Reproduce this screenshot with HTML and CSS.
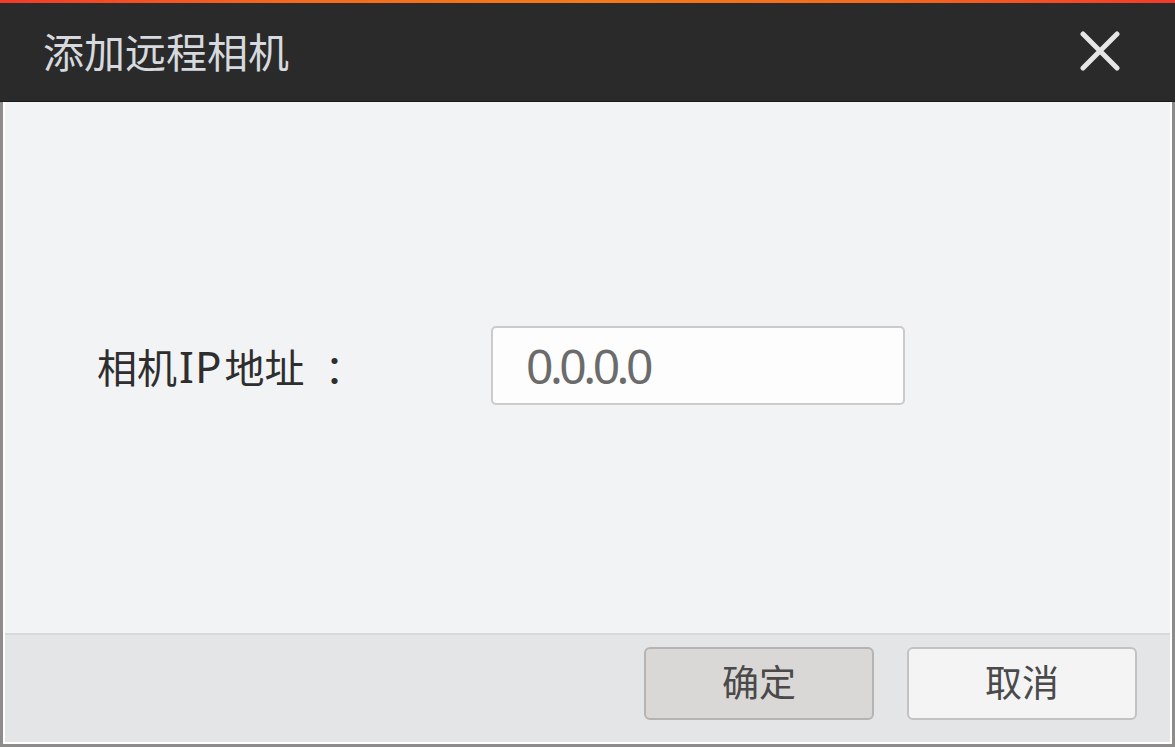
FILE: index.html
```html
<!DOCTYPE html>
<html lang="zh-CN">
<head>
<meta charset="utf-8">
<title>添加远程相机</title>
<link rel="stylesheet" href="styles.css">
</head>
<body>
<div class="window">
  <div class="accent"></div>
  <header class="titlebar">
    <span class="title">添加远程相机</span>
    <button class="close" aria-label="关闭">
      <svg width="40" height="40" viewBox="0 0 40 40"><path d="M3 3 L37 37 M37 3 L3 37" stroke="#e6e6e6" stroke-width="5" stroke-linecap="round" fill="none"/></svg>
    </button>
  </header>
  <div class="frame">
    <main class="content">
      <div class="form-row">
        <label class="label">相机<span class="latin">IP</span>地址<span class="colon">：</span></label>
        <div class="input"><span class="value">0.0.0.0</span></div>
      </div>
    </main>
    <footer class="footer">
      <button class="btn btn-ok">确定</button>
      <button class="btn btn-cancel">取消</button>
    </footer>
  </div>
</div>
</body>
</html>
```

FILE: styles.css
```css
html, body {
  margin: 0;
  padding: 0;
  width: 1175px;
  height: 747px;
  overflow: hidden;
  background: #ffffff;
}

.window {
  width: 1175px;
  height: 747px;
  display: flex;
  flex-direction: column;
  box-sizing: border-box;
  font-family: "Noto Sans CJK SC", "Noto Sans", sans-serif;
}

.accent {
  height: 3px;
  flex: none;
  background: linear-gradient(90deg, #f23a2a 0%, #f46a1e 25%, #f47a1a 50%, #f46a1e 75%, #f23a2a 100%);
}

.titlebar {
  height: 99px;
  flex: none;
  background: #2a2a2a;
  border-bottom: 1px solid #1a1a1a;
  display: flex;
  align-items: center;
  justify-content: space-between;
  padding: 0 55px 0 43px;
  box-sizing: border-box;
}

.title {
  color: #d6dade;
  font-size: 41px;
  line-height: 1;
  margin-top: -4px;
}

.close {
  background: none;
  border: 0;
  padding: 0;
  width: 40px;
  height: 40px;
  margin-top: -2px;
  display: flex;
}

.frame {
  flex: 1;
  display: flex;
  flex-direction: column;
  border-left: 3px solid #8e8b8b;
  border-right: 3px solid #8e8b8b;
  border-bottom: 3px solid #8e8b8b;
  box-shadow: inset 2px 0 0 #ffffff, inset -2px 0 0 #ffffff, inset 0 -2px 0 #ffffff;
  padding: 0 2px 2px 2px;
}

.content {
  flex: 1;
  background: #f2f3f5;
  display: flex;
  align-items: center;
  padding-bottom: 4px;
  box-sizing: border-box;
}

.form-row {
  display: flex;
  align-items: center;
  padding-left: 92px;
}

.label {
  width: 394px;
  font-size: 40px;
  color: #2e2e2e;
  line-height: 1;
}

.latin {
  font-family: "Noto Sans", sans-serif;
  font-size: 44px;
  letter-spacing: 1px;
  margin: 0 2px;
}

.colon {
  font-family: "Noto Sans CJK JP", "Noto Sans CJK SC", sans-serif;
  margin-left: 20px;
}

.input {
  width: 414px;
  height: 79px;
  box-sizing: border-box;
  border: 2px solid #cbcbcb;
  border-radius: 5px;
  background: #fdfdfd;
  display: flex;
  align-items: center;
  padding-left: 33px;
}

.value {
  font-family: "Noto Sans", sans-serif;
  font-size: 48px;
  letter-spacing: -3.5px;
  color: #6b6b6b;
  line-height: 1;
}

.footer {
  height: 109px;
  flex: none;
  background: #e4e5e6;
  border-top: 2px solid #d6dada;
  box-sizing: border-box;
  display: flex;
  align-items: flex-start;
  justify-content: flex-end;
  gap: 33px;
  padding: 12px 33px 0 0;
}

.btn {
  width: 230px;
  height: 73px;
  box-sizing: border-box;
  border-radius: 6px;
  font-family: "Noto Sans CJK SC", "Noto Sans", sans-serif;
  font-size: 37px;
  color: #4a4a4a;
  line-height: 1;
  padding: 0;
  padding-bottom: 4px;
}

.btn-ok {
  background: #dad8d6;
  border: 2px solid #b6b4b3;
}

.btn-cancel {
  background: #f4f4f5;
  border: 2px solid #c2c2c2;
}
```
